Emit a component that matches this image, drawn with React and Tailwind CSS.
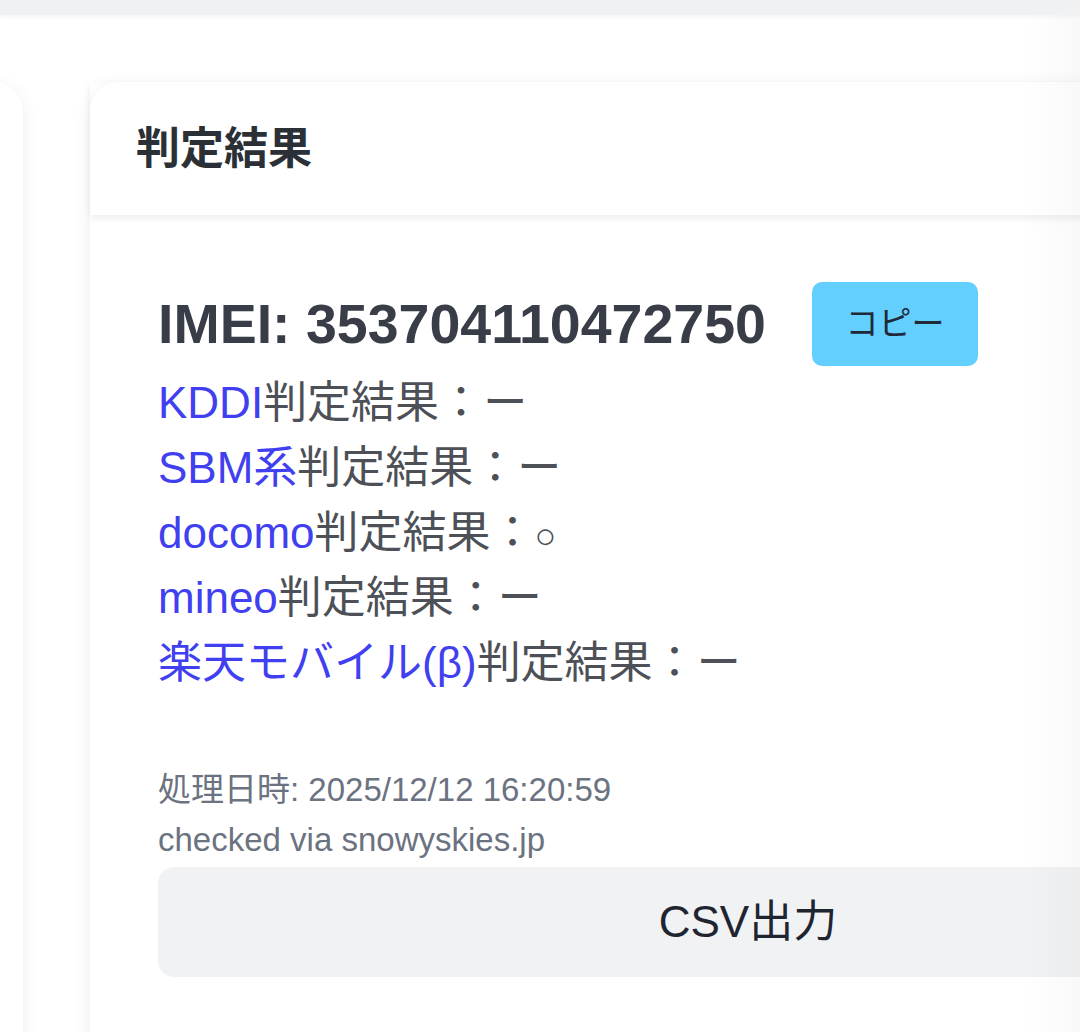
import React from "react";

const rows = [
  { carrier: "KDDI", value: "ー" },
  { carrier: "SBM系", value: "ー" },
  { carrier: "docomo", value: "○" },
  { carrier: "mineo", value: "ー" },
  { carrier: "楽天モバイル(β)", value: "ー" },
];

export default function App() {
  return (
    <div
      className="relative w-[1080px] h-[1032px] overflow-hidden bg-white"
      style={{ fontFamily: '"Liberation Sans", Arial, "Noto Sans CJK JP", sans-serif' }}
    >
      <div className="h-[15px] bg-[#f0f1f3] shadow-[0_2px_4px_rgba(0,0,0,0.04)]" />
      <div className="flex gap-[67px] pt-[67px]">
        <div className="ml-[-300px] w-[323px] h-[1100px] shrink-0 rounded-[30px] bg-white shadow-[0_4px_18px_rgba(0,0,0,0.07)]" />
        <div className="w-[1316px] shrink-0 rounded-[30px] bg-white shadow-[0_4px_18px_rgba(0,0,0,0.07)]">
          <div className="h-[133px] flex items-center px-[46px] shadow-[0_3px_8px_rgba(0,0,0,0.08)] relative z-10">
            <h2 className="text-[44px] font-bold text-[#2b2f36]">判定結果</h2>
          </div>
          <div className="px-[68px] pt-[67px] pb-[60px]">
            <div className="flex items-center gap-[46px]">
              <div className="text-[55.5px] font-bold text-[#383d47] leading-[84px]">IMEI: 353704110472750</div>
              <button className="w-[166px] h-[84px] rounded-[10px] bg-[#63cffe] text-[33px] text-[#1f2937] flex items-center justify-center">
                コピー
              </button>
            </div>
            <div className="text-[44px] leading-[65px] text-[#4d5056] mt-[4px]">
              {rows.map((r) => (
                <div key={r.carrier} className="h-[65px] whitespace-nowrap">
                  <span className="text-[#4040f0]">{r.carrier}</span>判定結果：
                  {r.value === "○" ? <span className="text-[36px] leading-[0]">○</span> : r.value}
                </div>
              ))}
            </div>
            <div className="mt-[70px] text-[33px] leading-[50px] text-[#6b7280]">
              <div>処理日時: 2025/12/12 16:20:59</div>
              <div>checked via snowyskies.jp</div>
            </div>
            <button className="mt-[2px] w-full h-[110px] rounded-[16px] bg-[#f1f2f4] text-[44px] text-[#1f2530] flex items-center justify-center">
              CSV出力
            </button>
          </div>
        </div>
      </div>
      <div className="pointer-events-none absolute top-[15px] right-0 w-[60px] h-[1017px] bg-gradient-to-r from-transparent to-[rgba(0,0,0,0.025)]" />
    </div>
  );
}
